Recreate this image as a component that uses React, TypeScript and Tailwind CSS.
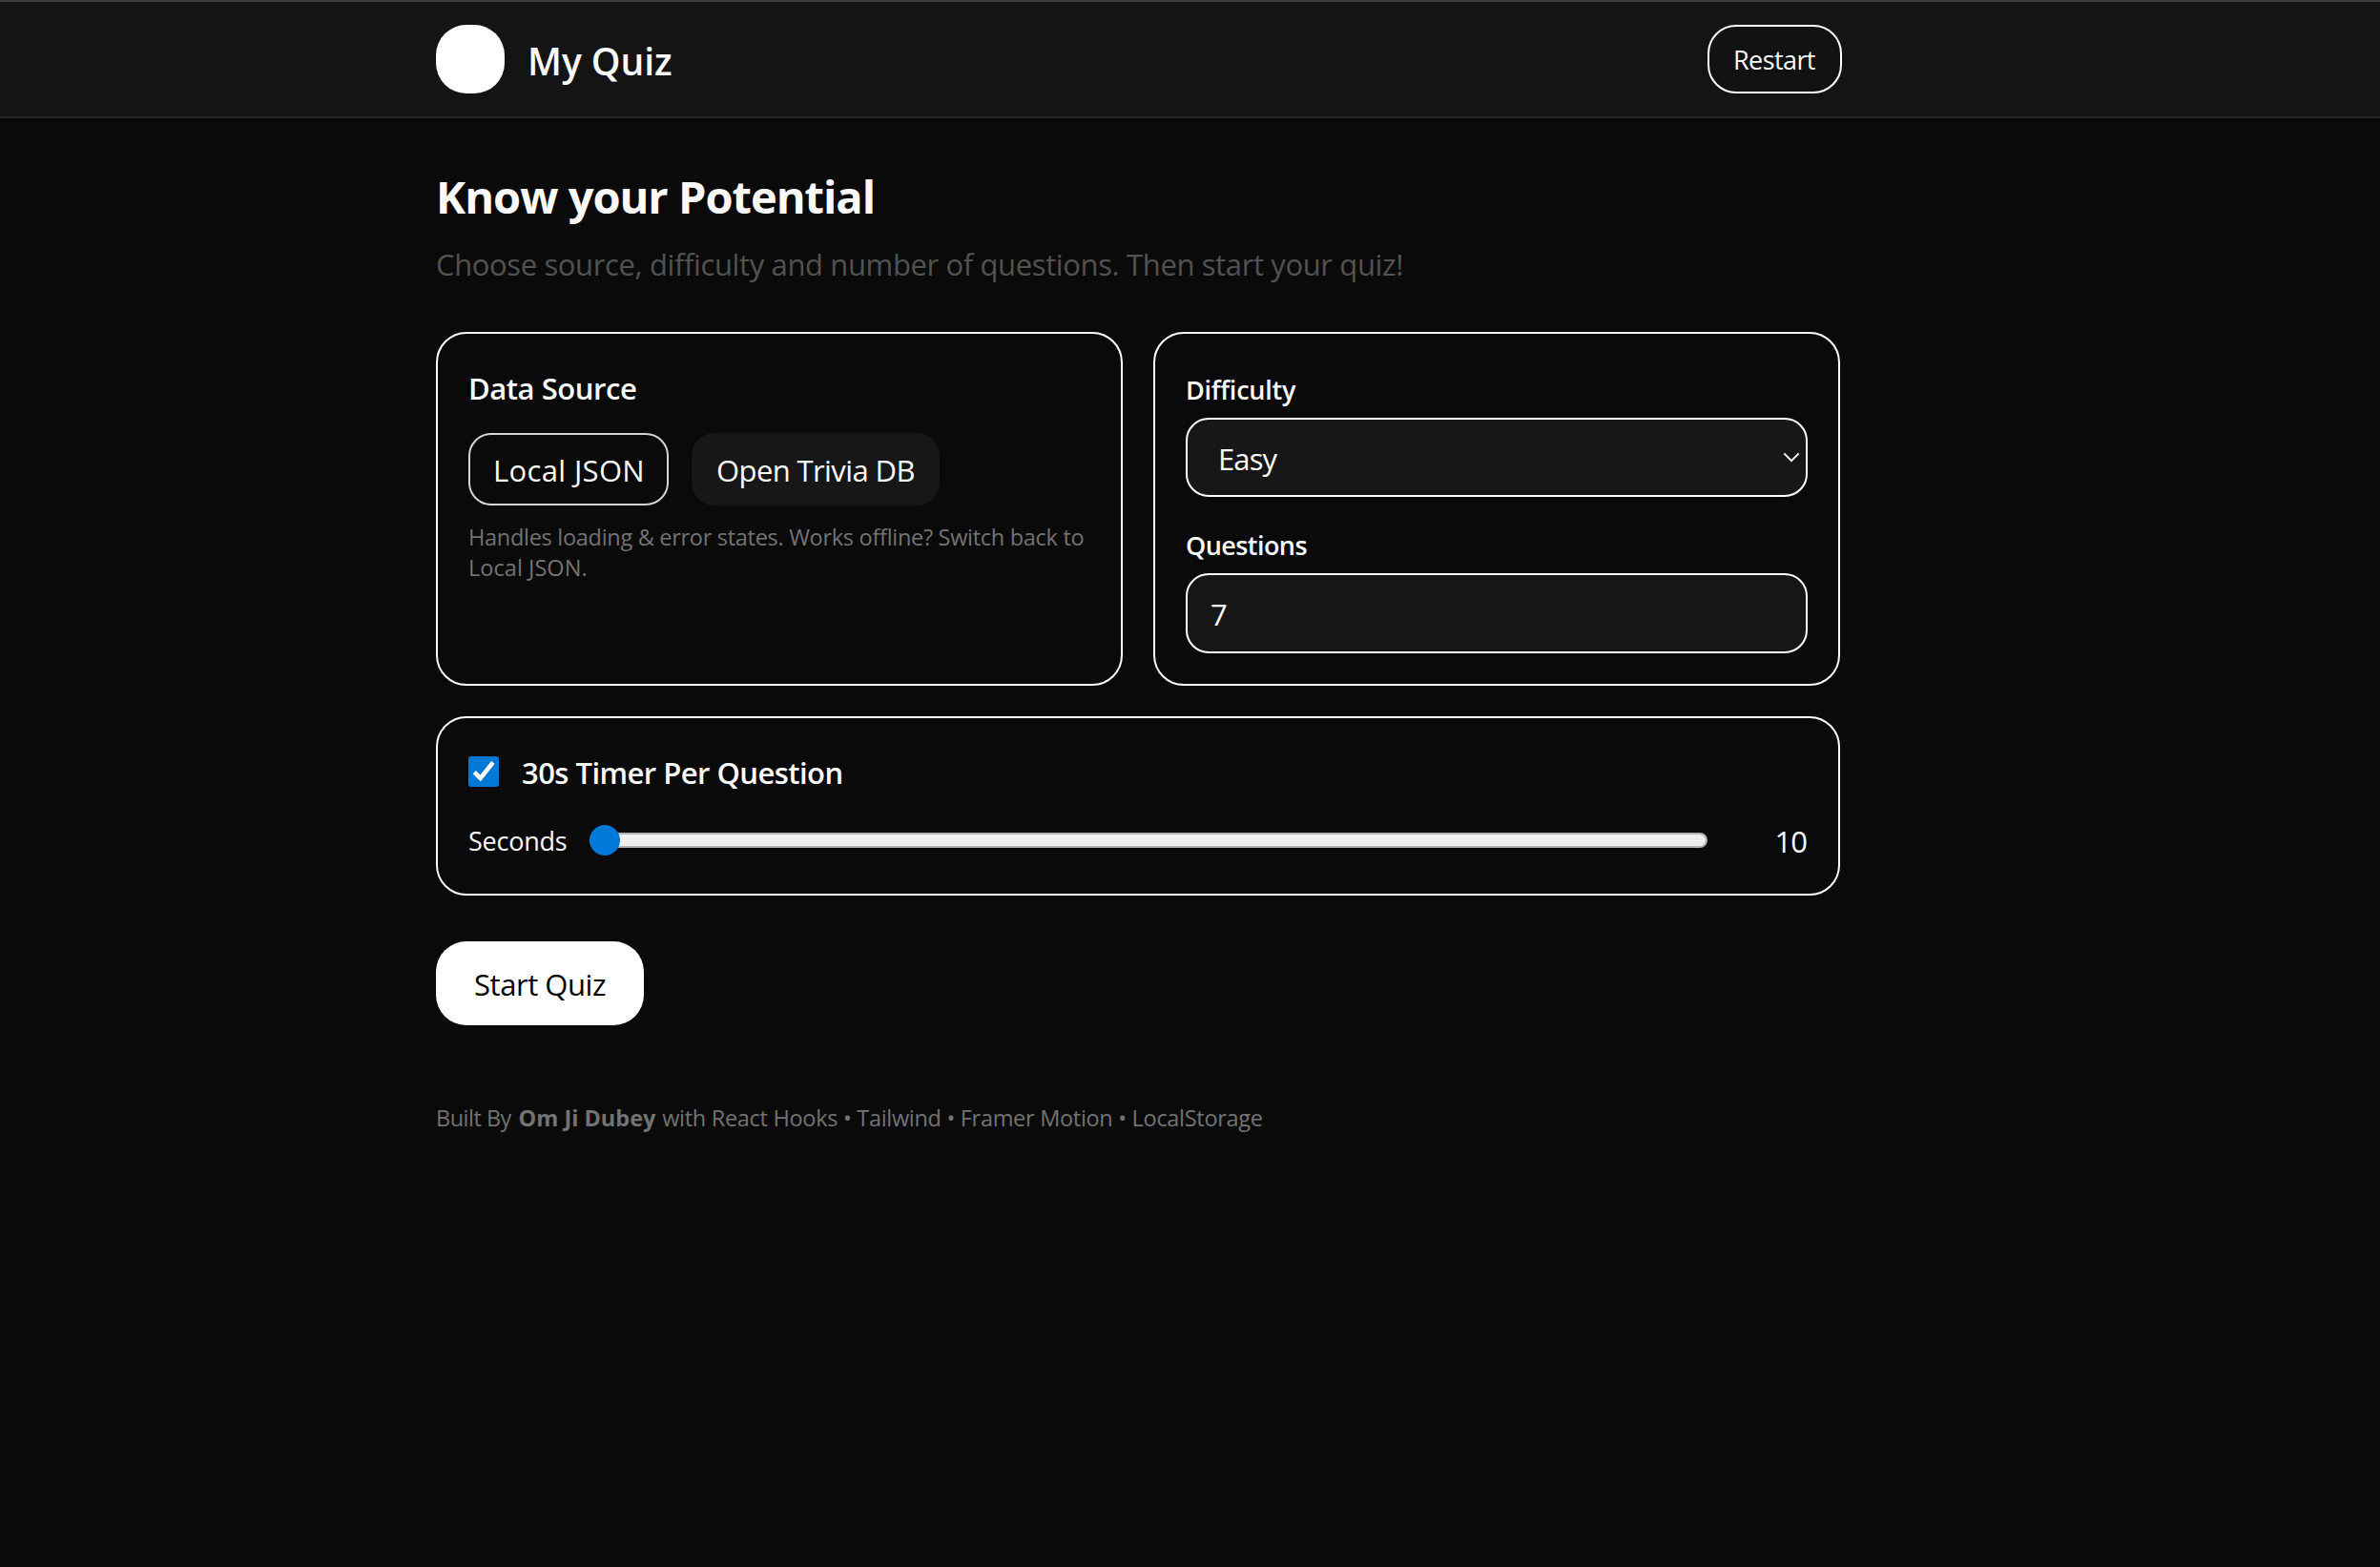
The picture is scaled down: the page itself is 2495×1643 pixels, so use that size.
import type { ReactNode } from "react";

function Card({ className = "", children }: { className?: string; children: ReactNode }) {
  return (
    <section className={`rounded-[32px] border-2 border-white px-8 py-8 ${className}`}>{children}</section>
  );
}

function Header() {
  return (
    <header className="flex h-[124px] items-center border-t-2 border-b-2 border-t-[#3d3d3d] border-b-[#262626] bg-[#141414]">
      <div className="ml-[457px] flex w-[1474px] items-center justify-between">
        <div className="flex items-center gap-6">
          <div className="size-[72px] rounded-[32px] bg-white" />
          <h1 className="pt-[4px] text-[39px] leading-[56px] font-semibold tracking-[-0.05px]">My Quiz</h1>
        </div>
        <button className="flex h-[72px] w-[141px] items-center rounded-[30px] border-2 border-white bg-[#121212] pt-[2px] pl-[25px] text-[27px] leading-[40px] tracking-[-0.58px]">
          Restart
        </button>
      </div>
    </header>
  );
}

function DataSource() {
  return (
    <Card>
      <h3 className="text-[31px] leading-[50px] font-semibold tracking-[-0.45px]">Data Source</h3>
      <div className="mt-[22px] flex gap-6">
        <button className="flex h-[76px] w-[210px] items-center rounded-3xl border-2 border-[#d4d4d4] pt-[2px] pl-6 text-[31px] leading-[48px] tracking-[0.35px] whitespace-nowrap">
          Local JSON
        </button>
        <button className="flex h-[76px] w-[260px] items-center rounded-3xl bg-[#171717] pt-[2px] pl-[26px] text-[31px] leading-[48px] tracking-[-0.6px] whitespace-nowrap">
          Open Trivia DB
        </button>
      </div>
      <p className="mt-[17px] text-[23.5px] leading-8 tracking-[-0.29px] whitespace-nowrap text-[#737373]">
        Handles loading &amp; error states. Works offline? Switch back to
        <br />
        <span className="tracking-[0.05px]">Local JSON.</span>
      </p>
    </Card>
  );
}

function QuizOptions() {
  return (
    <Card>
      <div className="text-[27px] leading-[54px] font-semibold tracking-[-0.25px]">Difficulty</div>
      <div className="mt-[2px] flex h-[83px] items-center justify-between rounded-3xl border-2 border-white bg-[#171717] pr-[5px] pl-8">
        <span className="pt-[3px] text-[31px] leading-[48px] tracking-[-0.9px]">Easy</span>
        <svg width="20" height="12" viewBox="0 0 20 12" fill="none" stroke="white" strokeWidth="2">
          <path d="M2.3 1.4 10 9.1l7.7-7.7" />
        </svg>
      </div>
      <div className="mt-6 text-[27px] leading-[54px] font-semibold tracking-[-0.56px]">Questions</div>
      <div className="mt-[2px] flex h-[84px] items-center rounded-3xl border-2 border-white bg-[#171717] pt-[2px] pl-6 text-[31px] leading-[48px]">
        7
      </div>
    </Card>
  );
}

function Timer() {
  return (
    <Card className="mt-8">
      <div className="flex h-12 items-center gap-6">
        <div className="flex size-8 items-center justify-center rounded-[3px] bg-[#0078d7]">
          <svg width="32" height="32" viewBox="0 0 32 32" fill="none" stroke="white" strokeWidth="4.6">
            <path d="M6.2 16.8 12.7 22.9 25.8 6.4" />
          </svg>
        </div>
        <span className="pt-[2px] text-[31px] leading-[46px] font-semibold tracking-[-0.54px]">
          30s Timer Per Question
        </span>
      </div>
      <div className="mt-6 flex h-12 items-center">
        <span className="w-[127px] pt-[2px] text-[27px] leading-[40px] tracking-[-0.25px]">Seconds</span>
        <div className="relative h-4 w-[1172px] rounded-full border-2 border-[#b2b2b2] bg-[#efefef]">
          <div className="absolute -top-[10px] -left-[2px] size-8 rounded-full bg-[#0078d7]" />
        </div>
        <span className="ml-auto pt-[2px] pr-[1px] text-[31px] leading-[46px] tracking-[-1px]">10</span>
      </div>
    </Card>
  );
}

export default function App() {
  return (
    <div className="min-h-[1643px] bg-[#0a0a0a] font-['Open_Sans','Noto_Sans',sans-serif] text-neutral-50">
      <Header />
      <main className="ml-[457px] w-[1472px] pt-[54px]">
        <h2 className="text-[47px] leading-[56px] font-bold tracking-[-1px]">Know your Potential</h2>
        <p className="mt-[19px] text-[31px] leading-[48px] tracking-[-0.375px] text-[#525252]">
          Choose source, difficulty and number of questions. Then start your quiz!
        </p>
        <div className="mt-[47px] grid grid-cols-2 gap-8">
          <DataSource />
          <QuizOptions />
        </div>
        <Timer />
        <button className="mt-12 flex h-[88px] w-[218px] items-center rounded-[32px] bg-white pt-[2px] pl-[40px] text-[31px] leading-[48px] tracking-[-0.45px] whitespace-nowrap text-black">
          Start Quiz
        </button>
        <footer className="mt-[81px] text-[23.5px] leading-8 tracking-[-0.3px] text-[#737373]">
          <span className="mr-[2px] tracking-[-0.5px]">Built By </span>
          <strong className="mr-[1px] font-bold tracking-normal">Om Ji Dubey</strong> with React Hooks • Tailwind •
          Framer Motion • LocalStorage
        </footer>
      </main>
    </div>
  );
}
